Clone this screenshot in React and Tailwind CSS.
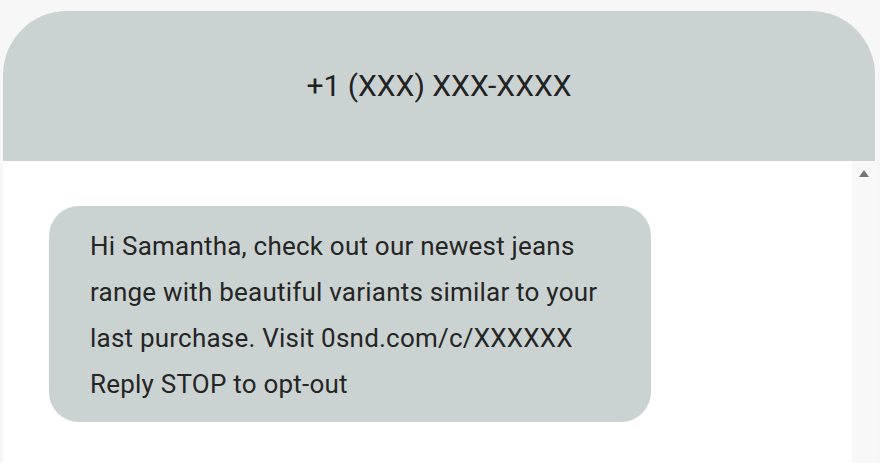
export default function App() {
  return (
    <div className="min-h-[463px] bg-[#f7f7f7] pt-[11px] pl-[3px] font-['Roboto',sans-serif] overflow-hidden h-[463px]">
      <div className="w-[872px]">
        {/* header */}
        <div className="h-[150px] bg-[#cad3d2] rounded-t-[64px] flex items-center justify-center">
          <span className="text-[30px] text-[#222] mb-[1px]">+1 (XXX) XXX-XXXX</span>
        </div>
        {/* thread */}
        <div className="flex bg-white h-[320px]">
          <div className="flex-1 pl-[46px] pt-[45px]">
            <div className="w-[602px] bg-[#cad3d2] rounded-[30px] pl-[41px] pr-[41px] pt-[17px] pb-[15px]">
              <p className="text-[26px] leading-[46px] tracking-[0.22px] text-[#252525]">
                Hi Samantha, check out our newest jeans range with beautiful variants similar to your last purchase. Visit 0snd.com/c/XXXXXX
                <br />
                Reply STOP to opt-out
              </p>
            </div>
          </div>
          <div className="w-[23px] bg-[#f8f8f8] flex justify-center pt-[9px]">
            <div className="w-0 h-0 border-l-[5px] border-r-[5px] border-b-[7px] border-l-transparent border-r-transparent border-b-[#777]" />
          </div>
        </div>
      </div>
    </div>
  );
}
